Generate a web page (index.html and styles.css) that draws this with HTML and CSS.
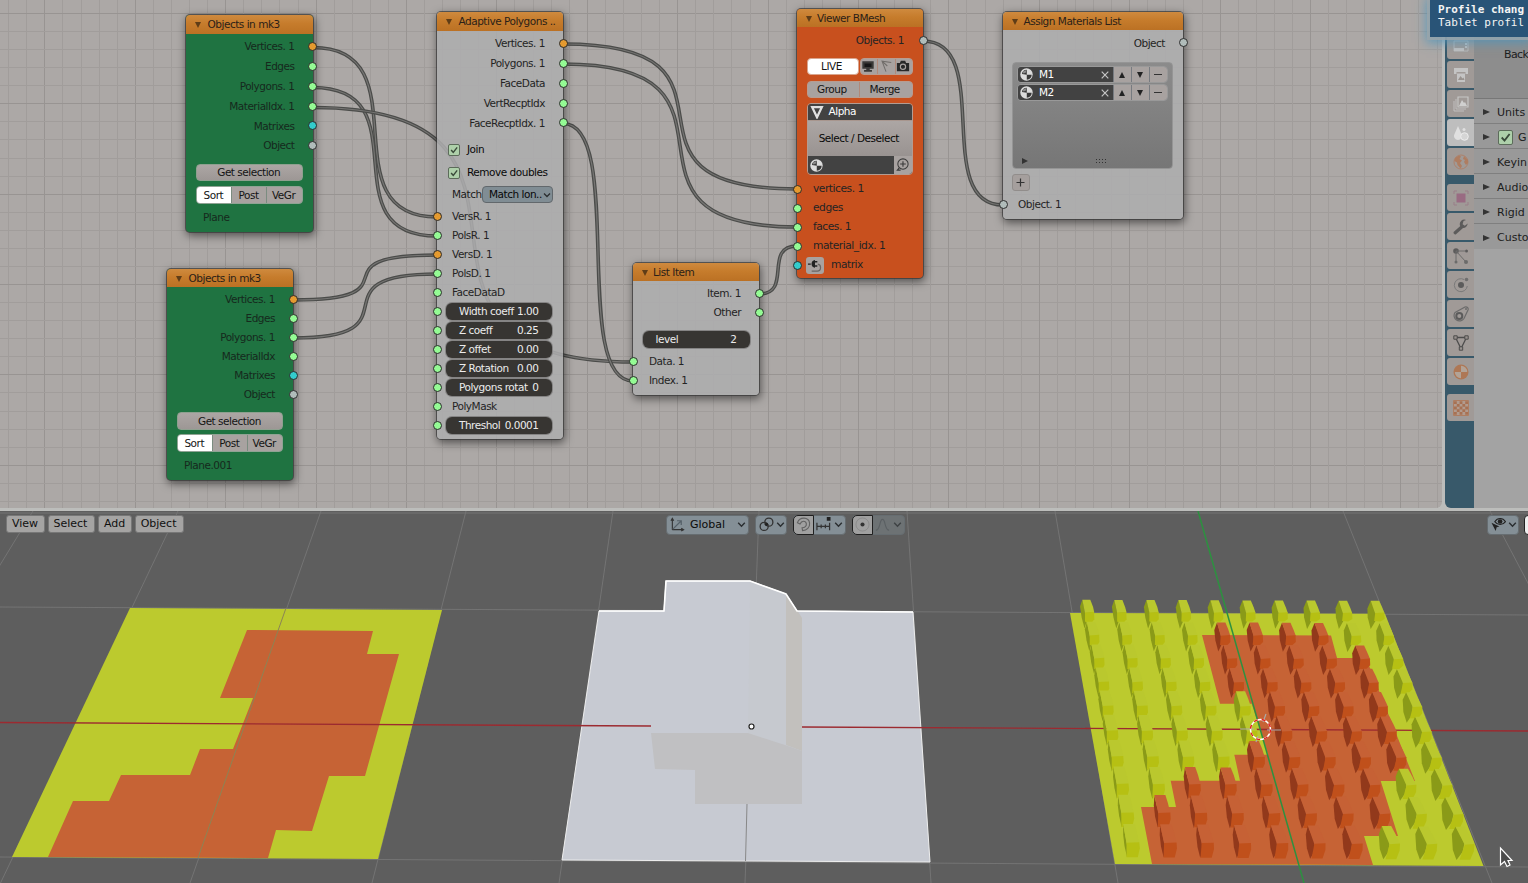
FILE: index.html
```html
<!DOCTYPE html>
<html lang="en">
<head>
<meta charset="utf-8">
<title>Node editor</title>
<link rel="stylesheet" href="styles.css">
</head>
<body>
<svg class="defs" width="0" height="0">
  <defs>
    <symbol id="i-mat" viewBox="0 0 16 16"><circle cx="8" cy="8" r="6.6" fill="#dcdcdc"/><path d="M8.300 8.300V3C5 3 3.400 5 3.200 7.500zM8.300 8.300h5.200c0 3-2 5-5.200 5.300z" fill="#383838"/><path d="M8 3.200L4.500 4.500 4 7l3-.5z" fill="#8a8a8a"/></symbol>
    <symbol id="i-chev" viewBox="0 0 10 10"><path d="M2 3.5l3 3 3-3" fill="none" stroke="#2a2e30" stroke-width="1.3"/></symbol>
    <symbol id="i-check" viewBox="0 0 12 12"><path d="M2.5 6l2.6 2.8L9.8 2.8" fill="none" stroke="#3a4a3a" stroke-width="1.7"/></symbol>
  </defs>
</svg>
<div class="app">
  <section class="top">
    <div class="editor">
      <svg class="canvas" id="grid" width="1442" height="508"></svg>

      <article class="node green n1">
        <header><i class="tri"></i>Objects in mk3</header>
        <div class="row out"><span>Vertices. 1</span><b class="s o"></b></div>
        <div class="row out"><span>Edges</span><b class="s g"></b></div>
        <div class="row out"><span>Polygons. 1</span><b class="s g"></b></div>
        <div class="row out"><span>MaterialIdx. 1</span><b class="s g"></b></div>
        <div class="row out"><span>Matrixes</span><b class="s c"></b></div>
        <div class="row out"><span>Object</span><b class="s w"></b></div>
        <div class="btn getsel">Get selection</div>
        <div class="seg"><span class="on">Sort</span><span>Post</span><span>VeGr</span></div>
        <div class="name">Plane</div>
      </article>

      <article class="node green n2">
        <header><i class="tri"></i>Objects in mk3</header>
        <div class="row out"><span>Vertices. 1</span><b class="s o"></b></div>
        <div class="row out"><span>Edges</span><b class="s g"></b></div>
        <div class="row out"><span>Polygons. 1</span><b class="s g"></b></div>
        <div class="row out"><span>MaterialIdx</span><b class="s g"></b></div>
        <div class="row out"><span>Matrixes</span><b class="s c"></b></div>
        <div class="row out"><span>Object</span><b class="s w"></b></div>
        <div class="btn getsel">Get selection</div>
        <div class="seg"><span class="on">Sort</span><span>Post</span><span>VeGr</span></div>
        <div class="name">Plane.001</div>
      </article>

      <article class="node n3">
        <header><i class="tri"></i>Adaptive Polygons ..</header>
        <div class="row out"><span>Vertices. 1</span><b class="s o"></b></div>
        <div class="row out"><span>Polygons. 1</span><b class="s g"></b></div>
        <div class="row out"><span>FaceData</span><b class="s g"></b></div>
        <div class="row out"><span>VertRecptIdx</span><b class="s g"></b></div>
        <div class="row out"><span>FaceRecptIdx. 1</span><b class="s g"></b></div>
        <div class="checkrow first"><i class="check"><svg><use href="#i-check"/></svg></i>Join</div>
        <div class="checkrow"><i class="check"><svg><use href="#i-check"/></svg></i>Remove doubles</div>
        <div class="matchrow"><span>Match</span><div class="select">Match lon..<svg><use href="#i-chev"/></svg></div></div>
        <div class="row in"><b class="s o"></b><span>VersR. 1</span></div>
        <div class="row in"><b class="s g"></b><span>PolsR. 1</span></div>
        <div class="row in"><b class="s o"></b><span>VersD. 1</span></div>
        <div class="row in"><b class="s g"></b><span>PolsD. 1</span></div>
        <div class="row in"><b class="s g"></b><span>FaceDataD</span></div>
        <div class="row in"><b class="s g"></b><div class="field"><span>Width coeff</span><span>1.00</span></div></div>
        <div class="row in"><b class="s g"></b><div class="field"><span>Z coeff</span><span>0.25</span></div></div>
        <div class="row in"><b class="s g"></b><div class="field"><span>Z offet</span><span>0.00</span></div></div>
        <div class="row in"><b class="s g"></b><div class="field"><span>Z Rotation</span><span>0.00</span></div></div>
        <div class="row in"><b class="s g"></b><div class="field"><span>Polygons rotat</span><span>0</span></div></div>
        <div class="row in"><b class="s g"></b><span>PolyMask</span></div>
        <div class="row in"><b class="s g"></b><div class="field"><span>Threshol</span><span>0.0001</span></div></div>
      </article>

      <article class="node n4">
        <header><i class="tri"></i>List Item</header>
        <div class="row out"><span>Item. 1</span><b class="s g"></b></div>
        <div class="row out"><span>Other</span><b class="s g"></b></div>
        <div class="field"><span>level</span><span>2</span></div>
        <div class="row in"><b class="s g"></b><span>Data. 1</span></div>
        <div class="row in"><b class="s g"></b><span>Index. 1</span></div>
      </article>

      <article class="node red n5">
        <header><i class="tri"></i>Viewer BMesh</header>
        <div class="row out"><span>Objects. 1</span><b class="s w"></b></div>
        <div class="live">
          <div class="livebtn">LIVE</div>
          <div class="seg icons">
            <span><svg viewBox="0 0 16 16"><path d="M1.500 2.500h13v8.500h-13zM6 11h4v1.500h2.500V14.500h-9v-2H6z" fill="#3a3937"/><path d="M4 5h8v4H4z" fill="#161616"/></svg></span>
            <span><svg viewBox="0 0 16 16"><path d="M14 4L3.500 2.500l4.500 12M3.500 2.500l6 5.500" fill="none" stroke="#716d6a" stroke-width="1.200"/></svg></span>
            <span><svg viewBox="0 0 16 16"><path d="M1 4.500h3.500l1-2.500h5l1 2.500H15V14H1z" fill="#282828"/><circle cx="8" cy="8.900" r="3" fill="none" stroke="#a8a2a0" stroke-width="1.300"/></svg></span>
          </div>
        </div>
        <div class="seg two"><span>Group</span><span>Merge</span></div>
        <div class="alpha">
          <div class="ahead"><svg viewBox="0 0 16 16"><path d="M2.500 2.500h11L8 14z" fill="none" stroke="#e0e0e0" stroke-width="2.600"/></svg>Alpha</div>
          <div class="asel">Select / Deselect</div>
          <div class="amat"><div><svg><use href="#i-mat"/></svg></div><i><svg viewBox="0 0 16 16"><circle cx="8.500" cy="7.500" r="5.500" fill="none" stroke="#3a3a3a" stroke-width="1.100"/><path d="M8.500 4.500v6M5.500 7.500h6M4.500 11.500L2.500 14H6" fill="none" stroke="#3a3a3a" stroke-width="1.200"/></svg></i></div>
        </div>
        <div class="row in"><b class="s o"></b><span>vertices. 1</span></div>
        <div class="row in"><b class="s g"></b><span>edges</span></div>
        <div class="row in"><b class="s g"></b><span>faces. 1</span></div>
        <div class="row in"><b class="s g"></b><span>material_idx. 1</span></div>
        <div class="row in mtx"><b class="s c"></b><i class="plug"><svg viewBox="0 0 16 16"><path d="M1 6.500h3M8 4h3M8 8.500h3" stroke="#222" stroke-width="1.400"/><path d="M8.500 2v8.500A4.300 4.300 0 0 1 8.500 2z" fill="#222"/><path d="M11.500 6.500c4 .5 4 7.500-.5 7.500H5" fill="none" stroke="#6a6562" stroke-width="1.300"/></svg></i><span>matrix</span></div>
      </article>

      <article class="node n6">
        <header><i class="tri"></i>Assign Materials List</header>
        <div class="row out"><span>Object</span><b class="s w"></b></div>
        <div class="list">
          <div class="item"><div class="mname"><svg><use href="#i-mat"/></svg><span>M1</span><svg class="x" viewBox="0 0 8 8"><path d="M.7.7l6.600 6.600M7.300.7L.7 7.300" stroke="#c4c4c4" stroke-width="1.200"/></svg></div><i><u class="up"></u></i><i><u class="dn"></u></i><i><u class="mi"></u></i></div>
          <div class="item"><div class="mname"><svg><use href="#i-mat"/></svg><span>M2</span><svg class="x" viewBox="0 0 8 8"><path d="M.7.7l6.600 6.600M7.300.7L.7 7.300" stroke="#c4c4c4" stroke-width="1.200"/></svg></div><i><u class="up"></u></i><i><u class="dn"></u></i><i><u class="mi"></u></i></div>
          <div class="lfoot"><u class="rt"></u><svg width="11" height="5"><path d="M0 1.500h11M0 4.500h11" stroke="#333" stroke-width="1" stroke-dasharray="1 2"/></svg></div>
        </div>
        <div class="plus"><svg viewBox="0 0 9 9"><path d="M4.500 .5v8M.5 4.500h8" stroke="#333" stroke-width="1.200"/></svg></div>
        <div class="row in"><b class="s w"></b><span>Object. 1</span></div>
      </article>
    </div>

    <aside class="props">
      <nav class="tabs">
        <i><svg viewBox="0 0 16 16"><path d="M1 3h14v10H1z" fill="none" stroke="#bbb"/><path d="M1 10h10v3H1zM12 5h2v2h-2zM12 8h2v2h-2z" fill="#c4c4c4"/></svg></i>
        <i><svg viewBox="0 0 16 16"><path d="M1 1h14v6h-2.500V5h-9v2H1z" fill="#c9c9c9"/><path d="M4 6.500h8V15H4z" fill="#c9c9c9"/><path d="M5 13l2.500-4 2 2.500 1-1 1 2.500z" fill="#98928e"/></svg></i>
        <i><svg viewBox="0 0 16 16"><path d="M5 1h10v10H5z" fill="none" stroke="#ccc" stroke-width="1.200"/><path d="M3 3v10h10M1 5v10h10" fill="none" stroke="#c4c4c4"/><path d="M6 10l3-6 2 3 1-1 2 4z" fill="#d6d6d6"/></svg></i>
        <i class="on"><svg viewBox="0 0 16 16"><path d="M5 1l3.500 8A4 4 0 1 1 1.500 9z" fill="#e4e4e4"/><circle cx="11.500" cy="11.500" r="3.800" fill="#d8d8d8" stroke="#f2f2f2"/><circle cx="11" cy="4.500" r="1.500" fill="#e4e4e4"/></svg></i>
        <i class="last"><svg viewBox="0 0 16 16"><circle cx="8" cy="8" r="7" fill="none" stroke="#b08068"/><path d="M2 4l4-2.500 2 1L6.500 5 9 6.500 7 9 9 12 7.500 14.500 4.500 11 4 8.500 1.500 7zM11 2l4 4v3l-2 2-2-3 1-2-2-1z" fill="#b07a5c"/></svg></i>
        <i class="gap"><svg viewBox="0 0 16 16"><path d="M3.500 3.500h9v9h-9z" fill="#996680"/><path d="M1 4V1h3M12 1h3v3M15 12v3h-3M4 15H1v-3" fill="none" stroke="#997c88"/></svg></i>
        <i><svg viewBox="0 0 16 16"><path d="M2.200 13.800l6.500-5.800" stroke="#555" stroke-width="3.200" stroke-linecap="round"/><path d="M14.800 4.500l-3 2.300-2.200-1.500L10.500 2 13 1a4.500 4.500 0 0 0-6 5.500c1 3.500 6.500 4 7.800-2z" fill="#555"/></svg></i>
        <i><svg viewBox="0 0 16 16"><circle cx="3" cy="3" r="2.800" fill="#555"/><circle cx="13.500" cy="3" r="1.500" fill="#555"/><circle cx="13" cy="14" r="2" fill="#666"/><circle cx="3" cy="14" r="1.500" fill="#666"/><path d="M3 3h10M3 3l10 11M3 3v11" stroke="#666"/></svg></i>
        <i><svg viewBox="0 0 16 16"><path d="M11 2.500A6.500 6.500 0 1 0 14.300 9" fill="none" stroke="#777"/><circle cx="8" cy="8" r="3" fill="#555"/><circle cx="13.500" cy="2.500" r="1.800" fill="#6a6a6a"/></svg></i>
        <i><svg viewBox="0 0 16 16"><path d="M2 6.500L12 1a2.300 2.300 0 0 1 3 3l-4 8.500A5.200 5.200 0 1 1 2 6.500z" fill="none" stroke="#666" stroke-width="1.200"/><circle cx="6.300" cy="10" r="3" fill="none" stroke="#555" stroke-width="2"/><circle cx="13" cy="3" r="1" fill="#666"/></svg></i>
        <i><svg viewBox="0 0 16 16"><path d="M2.500 2.500h11L8 13.500z" fill="none" stroke="#444" stroke-width="1.300"/><path d="M.8.8h3.400v3.400H.8zM11.800.8h3.400v3.400h-3.400zM6.300 11.800h3.400v3.400H6.300z" fill="#98928e" stroke="#444"/></svg></i>
        <i class="last"><svg viewBox="0 0 16 16"><circle cx="8" cy="8" r="7.500" fill="#b0744e"/><path d="M8 8V1.800A6.200 6.200 0 0 1 14.200 8zM8 8v6.200A6.200 6.200 0 0 1 1.800 8z" fill="#b5a497"/></svg></i>
        <i class="gap last"><svg viewBox="0 0 16 16"><path d="M.5.5h15v15H.5z" fill="#b39c8e" stroke="#b07a5c"/><path d="M1 2.700h14M1 8h14M1 13.300h14" stroke="#a86d4c" stroke-width="2.800" stroke-dasharray="2.800"/><path d="M3.800 5.400H15M3.800 10.700H15" stroke="#a86d4c" stroke-width="2.800" stroke-dasharray="2.800"/></svg></i>
      </nav>
      <div class="panels">
        <div class="sub">Back</div>
        <div class="panel"><u class="rt"></u>Units</div>
        <div class="panel"><u class="rt"></u><i class="check big"><svg><use href="#i-check"/></svg></i>G</div>
        <div class="panel"><u class="rt"></u>Keyin</div>
        <div class="panel"><u class="rt"></u>Audio</div>
        <div class="panel"><u class="rt"></u>Rigid</div>
        <div class="panel"><u class="rt"></u>Custo</div>
      </div>
    </aside>
    <div class="toast"><strong>Profile chang</strong><span>Tablet profil</span></div>
  </section>

  <section class="viewport">
    <svg class="scene" id="scene" viewBox="0 511 1528 372" width="1528" height="372"></svg>
    <div class="bar">
      <div class="menus"><span>View</span><span>Select</span><span>Add</span><span>Object</span></div>
      <div class="tools">
        <div class="tool orient"><svg class="i16" viewBox="0 0 16 16"><path d="M2.500 13.500V2M1 4l1.500-2.500L4 4M2.500 13.500H14M12 12l2.500 1.500L12 15" fill="none" stroke="#333" stroke-width="1.200"/><path d="M3 13l8.500-8.500M7.500 4H12v4.500" fill="none" stroke="#556068" stroke-width="1.300"/></svg><span>Global</span><svg class="ch"><use href="#i-chev"/></svg></div>
        <div class="tool pivot"><svg class="i16" viewBox="0 0 16 16"><circle cx="5.500" cy="10" r="4.300" fill="none" stroke="#333" stroke-width="1.400"/><circle cx="10.500" cy="5.500" r="4.300" fill="none" stroke="#333" stroke-width="1.400"/><circle cx="8" cy="7.800" r="1.800" fill="#222"/></svg><svg class="ch"><use href="#i-chev"/></svg></div>
        <div class="tool snap"><i class="act"><svg class="i16" viewBox="0 0 16 16"><path d="M1.500 6C4-.5 13.500-.5 14.500 6.500c.5 4.500-3 8-7.500 8l-.5-3C9.500 11.500 11.500 9.500 11 7 10.300 3.700 6 3.500 4.300 7.500z" fill="none" stroke="#626262" stroke-width="1.200"/></svg></i><svg class="i16" viewBox="0 0 16 16"><path d="M1 6v8M5.500 8v4M10 8v4M14.500 6v8M1 10h13.500" stroke="#333" stroke-width="1.300" fill="none"/><path d="M11.500 0h4v4h-4z" fill="#222"/></svg><svg class="ch"><use href="#i-chev"/></svg></div>
        <div class="tool prop"><i class="act"><svg class="i16" viewBox="0 0 16 16"><circle cx="8" cy="8" r="7" fill="none" stroke="#8b8b8b"/><circle cx="8" cy="8" r="2.200" fill="#333"/></svg></i><svg class="i16" viewBox="0 0 16 16"><path d="M1 14c5 0 3.500-11.500 7-11.500S10 14 15 14" fill="none" stroke="#5b6063" stroke-width="1.200"/></svg><svg class="ch"><use href="#i-chev"/></svg></div>
      </div>
      <div class="right">
        <div class="tool eye"><svg class="i16" viewBox="0 0 16 16"><path d="M4 5c3-4.500 8.500-4.500 11.500 0-3 4-8.500 4-11.500 0z" fill="none" stroke="#222" stroke-width="1.200"/><circle cx="9.700" cy="4.800" r="2.500" fill="#222"/><path d="M.5 6l8.500 4-3 1-1 4z" fill="#222"/></svg><svg class="ch"><use href="#i-chev"/></svg></div>
        <div class="tool cut"></div>
      </div>
    </div>
  </section>
</div>
<script src="scene.js"></script>
</body>
</html>
```

FILE: styles.css
```css
* { box-sizing: border-box; }
body { margin: 0; overflow: hidden; font: 11px/1 "DejaVu Sans", sans-serif; color: #1c1c1c; }
.defs { position: absolute; }
i, u, b { font-style: normal; text-decoration: none; }
svg { display: block; flex: none; }
.app { width: 1528px; height: 883px; display: flex; flex-direction: column; background: #bcbdbb; overflow: hidden; }
.top { position: relative; display: flex; height: 508px; gap: 3px; }
.editor { position: relative; width: 1442px; height: 508px; background: #aca8a6; border-radius: 0 0 6px 0; overflow: hidden; }
.canvas { position: absolute; left: 0; top: 0; }

/* nodes on the canvas */
.node { position: absolute; display: flex; flex-direction: column; font-size: 10.5px; letter-spacing: -.48px; border-radius: 4px; background: rgba(174,173,175,.86); box-shadow: 0 0 0 1px rgba(55,55,55,.7), 1px 3px 8px 1px rgba(0,0,0,.5); }
.node.green { background: #1f7341; }
.node.red { background: #c8501e; }
.node header { height: 18.5px; display: flex; align-items: center; padding-left: 9px; gap: 6.500px; border-radius: 4px 4px 0 0; background: linear-gradient(#cf8a3e, #c67c2c 45%, #bb7124); color: #2b2118; margin-bottom: 3px; white-space: nowrap; flex: none; }
.tri { width: 0; height: 0; border: 3px solid transparent; border-top: 6px solid #5f3d17; border-bottom: 0; margin-top: 2px; }
.row { position: relative; display: flex; align-items: center; height: 19px; flex: none; white-space: nowrap; color: #242424; }
.green .row, .green .name { color: #16291d; }
.out { justify-content: flex-end; padding-right: 18px; }
.in { padding-left: 15px; }
.s { position: absolute; width: 9px; height: 9px; border-radius: 50%; border: 1px solid #2c2c2c; top: 5px; }
.out .s { right: -4.500px; }
.in .s { left: -4.500px; }
.o { background: #e59a2f; } .g { background: #94fb94; } .c { background: #33cccc; } .w { background: #b0bcba; }
.btn, .seg span, .livebtn { display: flex; align-items: center; justify-content: center; height: 17.500px; color: #141414; background: linear-gradient(#aca6a4, #9d9795); }
.btn { margin: 0 10px; padding-right: 1px; border: 1px solid #8ea08f; border-radius: 4px; }
.seg { display: flex; height: 17.500px; margin: 0 10px; border: 1px solid #8fa394; border-radius: 4px; overflow: hidden; background: #7b8c80; gap: 1px; }
.seg span { flex: 1; height: 100%; padding-right: 1.500px; background: #a8a2a0; }
.seg .on { background: #fff; }
.green .seg { margin-top: 5px; }
.name { padding: 8px 0 0 17px; }

.n1 { left: 186px; top: 15px; width: 126.500px; height: 217px; }
.n1 .row, .n3 .out { height: 19.850px; }
.n1 .s, .n3 .out .s { top: 5.500px; }
.n1 .getsel { margin-top: 8px; }
.n2 { left: 167px; top: 268.500px; width: 126px; height: 211.500px; }
.n2 header { margin-bottom: 2.500px; }
.n2 .getsel { margin-top: 8.500px; }
.n2 .seg { margin-top: 4.500px; }

.n3 { left: 437px; top: 12px; width: 126px; height: 427px; }
.checkrow { display: flex; align-items: center; height: 23px; padding-left: 11px; gap: 7px; color: #080808; }
.checkrow.first { margin-top: 5.500px; }
.check { width: 12px; height: 12px; border: 1px solid #5c6b5a; border-radius: 2px; background: #aed0aa; }
.check svg { width: 10px; height: 10px; }
.matchrow { display: flex; align-items: center; height: 21px; padding-left: 15px; margin-bottom: 2px; }
.matchrow > span { width: 30px; }
.select { display: flex; align-items: center; justify-content: space-between; width: 71px; height: 17.500px; padding: 0 0 0 6px; border: 1px solid #62686c; border-radius: 4px; background: #808d94; color: #080808; white-space: nowrap; }
.select svg { width: 10px; height: 10px; }
.field { display: flex; justify-content: space-between; align-items: center; width: 107px; height: 17px; padding: 0 13px; border-radius: 6px; background: #373532; color: #ececec; box-shadow: 0 0 0 1px #858484; }
.row .field { margin-left: -6px; width: 105.500px; }

.n4 { left: 633px; top: 262.500px; width: 126px; height: 132px; }
.n4 header, .n5 header { gap: 5px; }
.n4 .field { margin: 9px 0 4px 9.500px; }
.n4 .in { padding-left: 16px; }

.n5 { left: 797px; top: 9px; width: 126px; height: 269px; }
.n5 header { height: 18px; }
.n5 header + .row { margin-top: .500px; margin-bottom: 8px; }
.n5 .out { padding-right: 19px; }
.live { display: flex; gap: 1.500px; margin: 0 10px 5.500px 9.500px; }
.livebtn { width: 52px; padding-right: 2px; background: #fff; border-radius: 4px; border: 1px solid #d9a58e; }
.n5 .seg { border-color: #b99c90; background: #b0897a; }
.seg.icons { flex: 1; margin: 0; }
.icons svg { width: 14px; height: 14px; }
.n5 .two { margin: 0 10px 0 9.500px; flex: none; }
.n5 .two span { padding-right: 3px; }
.alpha { display: flex; flex-direction: column; height: 72.500px; margin: 4.500px 10px 5px 9.500px; border: 1px solid #b39c92; border-radius: 4px; overflow: hidden; flex: none; }
.ahead { display: flex; align-items: center; height: 16px; padding-left: 2px; gap: 5px; background: #424242; color: #fff; }
.ahead svg { width: 14px; height: 14px; }
.asel { flex: 1; display: flex; align-items: center; justify-content: center; padding-right: 2px; background: linear-gradient(#aca6a4, #999391); color: #080808; border-top: 1px solid #a8968e; }
.amat { display: flex; height: 18px; background: #424242; align-items: center; justify-content: space-between; }
.amat div { padding-left: 1.500px; }
.amat svg { width: 15px; height: 15px; }
.amat > i { width: 18px; height: 18px; background: #a8a2a0; padding: 1px; }
.plug { width: 18px; height: 17px; border-radius: 3px; background: #a8a2a0; margin: 0 7px 0 -7px; padding: 1px; }
.n5 .in { padding-left: 16px; }
.n5 .in span { font-size: 10.700px; }
.plug svg { width: 15px; height: 15px; }

.n6 { left: 1003px; top: 12px; width: 180px; height: 207px; }
.n6 header { height: 18px; padding-left: 9px; gap: 5.500px; }
.n6 .row.out { height: 20px; }
.list { display: flex; flex-direction: column; gap: 1px; height: 107px; margin: 8.500px 10.500px 5px 9px; padding: 3.500px 4px; border-radius: 4px; border: 1px solid #959595; background: linear-gradient(#8b8b8b, #767676); flex: none; }
.item { display: flex; height: 17px; gap: 1px; border: 1px solid #999; border-radius: 4px; overflow: hidden; background: #777b80; }
.mname { display: flex; flex: 1; align-items: center; background: #424242; color: #fff; padding: 0 4px 0 1px; gap: 5px; }
.mname span { flex: 1; }
.mname svg { width: 15px; height: 15px; }
.mname .x { width: 8px; height: 8px; }
.item i { width: 17px; background: #a8a2a0; display: grid; place-items: center; }
.up, .dn { border: 3.500px solid transparent; border-bottom: 6px solid #222; border-top: 0; }
.dn { border-top: 6px solid #222; border-bottom: 0; }
.mi { width: 8px; height: 1px; background: #333; }
.lfoot { display: flex; align-items: center; margin-top: auto; padding: 0 0 0 5px; height: 7px; }
.lfoot svg { margin-left: 68px; }
.rt { border: 3px solid transparent; border-left: 6px solid #333; border-right: 0; }
.plus { display: grid; place-items: center; width: 18.500px; height: 17.500px; margin: 0 0 4px 8.500px; border: 1px solid #918d8b; border-radius: 3px; background: #a59f9d; }
.plus svg { width: 9px; height: 9px; }

/* properties editor */
.props { display: flex; width: 83px; height: 508px; border-radius: 6px 0 0 6px; overflow: hidden; background: #a3a3a3; }
.tabs { width: 29px; display: flex; flex-direction: column; gap: 2px; background: #38596a; padding: 32px 0 0 2px; flex: none; }
.tabs i { display: grid; place-items: center; height: 27px; background: #a09a97; border-radius: 3px 0 0 3px; }
.tabs .on { background: #bebebe; }
.tabs .gap { margin-top: 7px; }
.tabs svg { width: 16px; height: 16px; margin-left: 1px; opacity: .9; }
.panels { flex: 1; }
.sub { height: 98.500px; padding: 49px 0 0 30px; background: #8d8d8d; border-bottom: 1px solid #777; letter-spacing: -.6px; }
.panel { display: flex; align-items: center; gap: 7px; height: 25px; padding: 3px 0 0 9px; background: #999; border-bottom: 1px solid #7f7f7f; white-space: nowrap; }
.panel .rt { border-width: 3.500px; border-left-width: 7px; border-right-width: 0; }
.panel:last-child { border: 0; }
.check.big { width: 15px; height: 15px; flex: none; margin: 0 -2px 0 1px; }
.big svg { width: 13px; height: 13px; }
.toast { position: absolute; left: 1430px; top: 0; width: 98px; height: 37px; padding: 4px 0 0 8px; display: flex; flex-direction: column; gap: 2px; overflow: hidden; white-space: nowrap; background: #295477; color: #f4f4f4; font: 11px/11px "DejaVu Sans Mono", monospace; box-shadow: 0 0 0 3px rgba(155,165,170,.8), 0 2px 10px 4px rgba(75,150,190,.75); }

/* 3D view */
.viewport { position: relative; margin-top: 3px; height: 372px; background: #5e5e5e; }
.scene { position: absolute; left: 0; top: 0; }
.bar { position: relative; display: flex; padding: 3.500px 0 0 6px; height: 25px; align-items: flex-start; }
.menus { display: flex; gap: 3px; width: 660px; flex: none; }
.menus span { display: flex; align-items: center; height: 18.500px; padding: 0 5.400px 0 5px; border-radius: 3px; background: #a5a4a3; border: 1px solid #777; color: #101010; }
.menus span:nth-child(2), .menus span:nth-child(4) { padding-right: 6.500px; }
.tools { display: flex; gap: 6px; width: 821px; flex: none; }
.tool { display: flex; align-items: center; height: 20px; border-radius: 4px; background: #848f96; border: 1px solid #666d71; color: #0a0a0a; padding: 0 3px; }
.i16 { width: 15px; height: 15px; }
.ch { width: 11px; height: 11px; }
.orient { width: 83px; justify-content: space-between; padding-right: 1px; }
.orient span { margin-right: 6px; }
.pivot { width: 32px; padding: 0 1px 0 3px; gap: 1px; }
.snap, .prop { width: 53px; padding: 0; gap: 2px; }
.prop { background: #6d7274; }
.prop .ch { opacity: .7; }
.act { width: 21px; height: 20px; display: grid; place-items: center; background: #a0a0a0; border: 1px solid #202020; border-radius: 5px 0 0 5px; margin: -1px 0 -1px -1px; }
.right { display: flex; gap: 5px; }
.eye { width: 32px; padding: 0 1px 0 3px; gap: 1px; }
.cut { width: 12px; background: #eee; border-color: #222; flex: none; }
```

FILE: scene.js
```js
// Node canvas: grid and links.
const line = (x1, y1, x2, y2, c, w) => `<line x1="${x1}" y1="${y1}" x2="${x2}" y2="${y2}" stroke="${c}" stroke-width="${w || 1}"/>`;
const poly = (pts, c, extra) => `<polygon points="${pts}" fill="${c}" ${extra || ''}/>`;

let out = '';
for (let k = -14; k < 70; k++) {
  const major = ((k % 5) + 5) % 5 === 0;
  const c = major ? '#989492' : '#a19d9b';
  const x = Math.round(225.2 + k * 18.08) + .5;
  const y = Math.round(13 + k * 18.07) + .5;
  if (x < 1442) out += line(x, 0, x, 508, c);
  if (y < 508 && y > 0) out += line(0, y, 1442, y, c);
}
const links = [
  [313, 47.5, 437, 217], [313, 87.5, 437, 236], [313, 107.5, 633, 362],
  [293.5, 300, 437, 255], [293.5, 338, 437, 274],
  [563, 44, 797, 189], [563, 64, 797, 227], [563, 123.5, 633, 381],
  [759, 294, 797, 246], [923, 41, 1003, 205]
];
for (const [a, b, c, d] of links) {
  const h = (c - a) * .9;
  const p = `M${a} ${b}C${a + h} ${b} ${c - h} ${d} ${c} ${d}`;
  out += `<path d="${p}" fill="none" stroke="#4b4c4a" stroke-width="3.6"/><path d="${p}" fill="none" stroke="#777674" stroke-width="1.2"/>`;
}
document.getElementById('grid').innerHTML = out;

// 3D view.
const G = '#747474', Y = '#bcca2e', O = '#c66335';
let s = '';
[[33, 511, -3, 570], [178, 511, -10, 905], [321, 511, 190, 883], [466, 511, 372, 883], [613, 511, 559, 883],
 [759, 511, 745, 883], [907, 511, 931, 883], [1055, 511, 1118, 883], [1343, 511, 1492, 883], [1490, 511, 1530, 587],
 [0, 513, 1528, 513], [0, 607, 1528, 615], [0, 857, 1528, 867]].forEach(l => s += line(...l, G));

s += poly('130,608 442,610 378,859 12,857', Y);
s += poly('247,630 373,631 367,654 399,654 365,776 329,776 312,831 276,830 268,858 48,857 73,801 109,801 121,775 190,775 200,749 233,749 253,698 220,698', O);
s += line(286, 608, 198, 858, '#8b8455');

s += poly('599,611 664,611 666,581 750,581 786,594 797,611 913,612 930,862 562,860', '#c7cad2', 'stroke="#eee" stroke-width="1"');
s += line(747, 804, 745.5, 861, '#888');
s += poly('750,581 786,594 786,745 748,733', '#c6c9cf');
s += poly('786,594 797,610 802,618 802,751 786,745', '#c2c0bd');
s += poly('651,733 748,733 785,745 802,751 802,804 695,804 695,770 655,769', '#c0c0c2');
s += '<path d="M599 611H664L666 581H750L786 594 797 611 913 612" fill="none" stroke="#fff" stroke-width="1.6"/>';
s += line(0, 722.5, 651, 726, '#9c2a30', 1.3);
s += '<circle cx="751.500" cy="726.500" r="2.500" fill="#fff" stroke="#222" stroke-width="1.200"/>';
s += line(802, 727, 1528, 731, '#9c2a30', 1.3);

s += poly('1070,613 1385,613.700 1483.500,866 1115,864', Y);
s += poly('1202,635 1331,635.500 1337,658 1366,658 1415,781 1380.700,781 1398,836 1364,836 1373,865 1152,864 1141,807 1176,807 1170.700,780.700 1240,780.700 1234.300,754.700 1268,754.700 1251.700,703.700 1220,703.700', O);
s += line(1085, 728.4, 1425, 730.4, '#9c2a30', 1.3);

const rowY = [616.5, 639.5, 662.7, 686.5, 710.5, 735.5, 761.5, 789, 818, 848];
const x0 = [1088, 1093, 1098, 1102.7, 1107, 1111.5, 1116.7, 1122, 1127, 1132.5];
const x9 = [1376.7, 1386, 1395.3, 1404.3, 1414, 1423.3, 1433.3, 1443.7, 1454.7, 1465.5];
const orange = [[9, 0], [4, 7], [4, 8], [4, 8], [5, 8], [5, 8], [4, 8], [2, 7], [1, 7], [1, 6]];
// Face outlines of a block at the four corners of the field:
// back-left, back-right, front-left, front-right.
const shape = {
  side: [
    [-5.7, -16.7, -8, -10, -6.3, 1, -3.5, 12, -1.7, 6, -3, -4],
    [-6, -15.7, -9.3, -8, -9, 1, -6, 12.5, -1.5, 5, -1.5, -6],
    [-9.3, -23, -9.3, -13, -8, -2, -5.5, 9, -4.5, 5, -6, -6],
    [-10, -21.3, -13.7, -14, -12.7, 2, -9, 12, -3, 4, -.5, -7]],
  top: [
    [-5.7, -16.7, 2.3, -16.7, 5, -9.7, 6.3, -4, -3, -3.5],
    [-6, -15.7, 2.5, -15.7, 5.5, -9, 8, -3, -1.5, -3],
    [-9.3, -24, 2.3, -24, 4.5, -16, 6.7, -5, -6, -4.8],
    [-10, -21.3, -1, -21.3, 4, -13, 9, -3.5, -.7, -3]],
  front: [
    [-3, -4, 6, -4.7, 6.3, 2.7, 4.3, 5.3, -3, 5.3],
    [-1.5, -3.5, 7.5, -4, 8, 2.5, 3.5, 5, -2.5, 4.5],
    [-6, -5.3, 6.7, -5.7, 7.3, .3, 5.3, 9.3, -6, 9.3],
    [-.7, -3.3, 9, -4, 8.3, 3.3, 4.7, 11.7, -6, 11.7]]
};
const part = (name, c, r, x, y) => {
  const [a, b, d, e] = shape[name];
  const u = c / 9, v = r / 9;
  return a.map((n, i) => {
    const w = (n * (1 - u) + b[i] * u) * (1 - v) + (d[i] * (1 - u) + e[i] * u) * v;
    return ((i % 2 ? y : x) + w).toFixed(1);
  }).join(' ');
};
for (let r = 0; r < 10; r++) {
  for (let c = 0; c < 10; c++) {
    const x = x0[r] + (x9[r] - x0[r]) * c / 9, y = rowY[r];
    const hot = c >= orange[r][0] && c <= orange[r][1];
    s += poly(part('side', c, r, x, y), hot ? '#92391b' : '#8a9a18');
    s += poly(part('top', c, r, x, y), hot ? '#c66135' : '#bac82e');
    s += poly(part('front', c, r, x, y), hot ? '#c0501b' : '#b6c013');
  }
}
s += line(1198, 511, 1304, 883, '#2d9140', 1.5);
s += '<path d="M1240 729h14M1267 730h14M1256 742l2-6M1263 722l3-8" stroke="#aaa" stroke-width="1.200"/>';
s += '<circle cx="1260.500" cy="729.500" r="10" fill="none" stroke="#fff" stroke-width="1.400"/><circle cx="1260.500" cy="729.500" r="10" fill="none" stroke="#e02020" stroke-width="1.400" stroke-dasharray="4 4"/>';
s += '<path d="M1500.500 848v17l4-3.500 2.500 5 3-1.500-2-4.500h4z" fill="#4c4c4c" stroke="#fff" stroke-width="1.200"/>';
document.getElementById('scene').innerHTML = s;
```
